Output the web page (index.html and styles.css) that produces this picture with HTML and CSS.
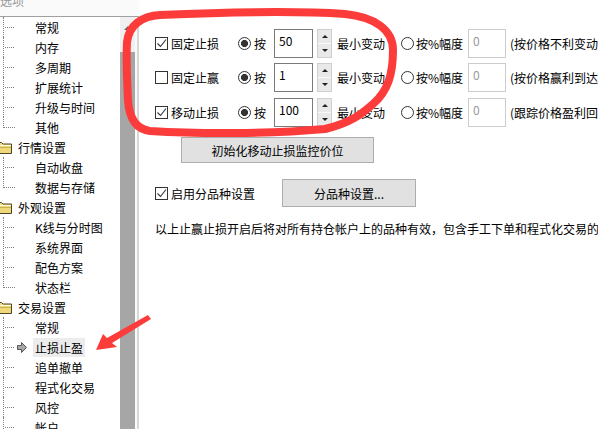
FILE: index.html
```html
<!DOCTYPE html>
<html lang="zh-CN">
<head>
<meta charset="utf-8">
<title>选项 - 止损止盈</title>
<link rel="stylesheet" href="styles.css">
</head>
<body>
<div class="app">
  <aside class="side">
    <div class="side-head"><span class="side-title">选项</span></div>
    <div class="side-body">
      <ul class="tree">
        <li class="node child"><span class="branch"></span><span class="mark"></span><span class="label">常规</span></li>
        <li class="node child"><span class="branch"></span><span class="mark"></span><span class="label">内存</span></li>
        <li class="node child"><span class="branch"></span><span class="mark"></span><span class="label">多周期</span></li>
        <li class="node child"><span class="branch"></span><span class="mark"></span><span class="label">扩展统计</span></li>
        <li class="node child"><span class="branch"></span><span class="mark"></span><span class="label">升级与时间</span></li>
        <li class="node child last"><span class="branch"></span><span class="mark"></span><span class="label">其他</span></li>
        <li class="node parent"><svg class="folder" width="16" height="13" viewBox="0 0 16 13"><path d="M0.5 1.5h5l1.5 1.5h8.5v9.5h-15z" fill="#efd97a" stroke="#4d4426"/><path d="M1.5 4.5h13.5" stroke="#fffbe0"/><path d="M1 6.5h14" stroke="#c9b14e"/></svg><span class="label">行情设置</span></li>
        <li class="node child"><span class="branch"></span><span class="mark"></span><span class="label">自动收盘</span></li>
        <li class="node child last"><span class="branch"></span><span class="mark"></span><span class="label">数据与存储</span></li>
        <li class="node parent"><svg class="folder" width="16" height="13" viewBox="0 0 16 13"><path d="M0.5 1.5h5l1.5 1.5h8.5v9.5h-15z" fill="#efd97a" stroke="#4d4426"/><path d="M1.5 4.5h13.5" stroke="#fffbe0"/><path d="M1 6.5h14" stroke="#c9b14e"/></svg><span class="label">外观设置</span></li>
        <li class="node child"><span class="branch"></span><span class="mark"></span><span class="label">K线与分时图</span></li>
        <li class="node child"><span class="branch"></span><span class="mark"></span><span class="label">系统界面</span></li>
        <li class="node child"><span class="branch"></span><span class="mark"></span><span class="label">配色方案</span></li>
        <li class="node child last"><span class="branch"></span><span class="mark"></span><span class="label">状态栏</span></li>
        <li class="node parent"><svg class="folder" width="16" height="13" viewBox="0 0 16 13"><path d="M0.5 1.5h5l1.5 1.5h8.5v9.5h-15z" fill="#efd97a" stroke="#4d4426"/><path d="M1.5 4.5h13.5" stroke="#fffbe0"/><path d="M1 6.5h14" stroke="#c9b14e"/></svg><span class="label">交易设置</span></li>
        <li class="node child"><span class="branch"></span><span class="mark"></span><span class="label">常规</span></li>
        <li class="node child selected"><span class="branch"></span><span class="mark"><svg width="10" height="11" viewBox="0 0 10 11"><path d="M0.5 3.5h4v-3l5 5-5 5v-3h-4z" fill="#a8a8a8" stroke="#555"/></svg></span><span class="label">止损止盈</span></li>
        <li class="node child"><span class="branch"></span><span class="mark"></span><span class="label">追单撤单</span></li>
        <li class="node child"><span class="branch"></span><span class="mark"></span><span class="label">程式化交易</span></li>
        <li class="node child"><span class="branch"></span><span class="mark"></span><span class="label">风控</span></li>
        <li class="node child"><span class="branch"></span><span class="mark"></span><span class="label">帐户</span></li>
      </ul>
      <div class="vscroll">
        <div class="vs-top"><span class="vs-arrow"></span></div>
        <div class="vs-thumb"></div>
      </div>
      <div class="side-edge"></div>
    </div>
  </aside>

  <main class="panel">
    <div class="opts">
      <div class="opt">
        <span class="chk"><svg width="11" height="11" viewBox="0 0 11 11"><path d="M1.5 5.5l3 3 5.5-7" fill="none" stroke="#333" stroke-width="1.1"/></svg></span>
        <span class="olbl">固定止损</span>
        <span class="rad on"></span><span class="rlbl">按</span>
        <span class="edit">50</span>
        <span class="spin"><span class="sp"><i class="up"></i></span><span class="sp"><i class="dn"></i></span></span>
        <span class="unit">最小变动</span>
        <span class="rad"></span><span class="plbl">按%幅度</span>
        <span class="edit dis">0</span>
        <span class="note">(按价格不利变动</span>
      </div>
      <div class="opt">
        <span class="chk"></span>
        <span class="olbl">固定止赢</span>
        <span class="rad on"></span><span class="rlbl">按</span>
        <span class="edit">1</span>
        <span class="spin"><span class="sp"><i class="up"></i></span><span class="sp"><i class="dn"></i></span></span>
        <span class="unit">最小变动</span>
        <span class="rad"></span><span class="plbl">按%幅度</span>
        <span class="edit dis">0</span>
        <span class="note">(按价格赢利到达</span>
      </div>
      <div class="opt">
        <span class="chk"><svg width="11" height="11" viewBox="0 0 11 11"><path d="M1.5 5.5l3 3 5.5-7" fill="none" stroke="#333" stroke-width="1.1"/></svg></span>
        <span class="olbl">移动止损</span>
        <span class="rad on"></span><span class="rlbl">按</span>
        <span class="edit">100</span>
        <span class="spin"><span class="sp"><i class="up"></i></span><span class="sp"><i class="dn"></i></span></span>
        <span class="unit">最小变动</span>
        <span class="rad"></span><span class="plbl">按%幅度</span>
        <span class="edit dis">0</span>
        <span class="note">(跟踪价格盈利回</span>
      </div>
    </div>

    <div class="btn btn-init">初始化移动止损监控价位</div>

    <div class="opt opt-split">
      <span class="chk"><svg width="11" height="11" viewBox="0 0 11 11"><path d="M1.5 5.5l3 3 5.5-7" fill="none" stroke="#333" stroke-width="1.1"/></svg></span>
      <span class="olbl wide">启用分品种设置</span>
      <div class="btn btn-split">分品种设置...</div>
    </div>

    <p class="info">以上止赢止损开启后将对所有持仓帐户上的品种有效，包含手工下单和程式化交易的</p>
  </main>

  <svg class="annot" width="598" height="429" viewBox="0 0 598 429">
    <path d="M160 15 C230 12 300 11 345 14 C375 17 393 30 393 50 C393 74 388 91 373 104 C362 114 350 123 325 129 C270 134 200 134 150 131 C135 129 129 117 128 100 C127 80 126 60 127 42 C129 25 142 16 160 15 Z" fill="none" stroke="#fc3b3b" stroke-width="8" stroke-linejoin="round"/>
    <polygon points="96,350 103,334 107,338 148,315 151,319 112,343 117,347" fill="#fc3b3b"/>
  </svg>
</div>
</body>
</html>
```

FILE: styles.css
```css
html, body {
  margin: 0;
  padding: 0;
  background: #fff;
}

body {
  font-family: "Noto Sans CJK SC", "Microsoft YaHei", sans-serif;
  font-size: 12px;
  color: #000;
}

.app {
  position: relative;
  display: flex;
  width: 598px;
  height: 429px;
  overflow: hidden;
}

/* ---------- left side ---------- */
.side {
  width: 139px;
  flex: none;
  display: flex;
  flex-direction: column;
}

.side-head {
  height: 16px;
  flex: none;
  background: #fafafa;
  border-bottom: 1px solid #a0a0a0;
  overflow: hidden;
}

.side-title {
  display: block;
  margin-top: -7px;
  line-height: 16px;
  color: #9a9a9a;
}

.side-body {
  flex: 1;
  display: flex;
  min-height: 0;
}

.tree {
  width: 120px;
  flex: none;
  list-style: none;
  margin: 0;
  padding: 0;
  overflow: hidden;
  background: #fff;
}

.node {
  height: 20px;
  display: flex;
  align-items: center;
  white-space: nowrap;
}

.branch {
  flex: none;
  box-sizing: border-box;
  margin-left: 3px;
  width: 12px;
  height: 20px;
  border-left: 1px dotted #808080;
  background: repeating-linear-gradient(90deg, #808080 0 1px, transparent 1px 2px) 1px 10px / 100% 1px no-repeat;
}

.node.last .branch {
  align-self: flex-start;
  height: 11px;
  background: none;
  border-bottom: 1px dotted #808080;
}

.mark {
  flex: none;
  width: 18px;
  display: flex;
  align-items: center;
  padding-left: 2px;
  box-sizing: border-box;
}

.label {
  padding: 0 2px;
  line-height: 19px;
}

.node.selected .label {
  background: #ececec;
}

.folder {
  flex: none;
  margin-left: -4px;
  margin-right: 4px;
}

.vscroll {
  width: 15px;
  flex: none;
  background: #f0f0f0;
  display: flex;
  flex-direction: column;
}

.vs-top {
  height: 35px;
  flex: none;
  display: flex;
  justify-content: center;
  padding-top: 9px;
  box-sizing: border-box;
}

.vs-arrow {
  width: 0;
  height: 0;
  border-left: 4px solid transparent;
  border-right: 4px solid transparent;
  border-bottom: 4px solid #606060;
}

.vs-thumb {
  flex: 1;
  background: #a6a6a6;
}

.side-edge {
  width: 4px;
  flex: none;
  box-sizing: border-box;
  border-left: 2px solid #fafafa;
  border-right: 2px solid #d8d8d8;
}

/* ---------- right panel ---------- */
.panel {
  flex: 1;
  min-width: 0;
  overflow: hidden;
  background: #fff;
  padding: 29px 0 0 16px;
}

.opts {
  display: flex;
  flex-direction: column;
  gap: 5px;
}

.opt {
  display: flex;
  align-items: center;
  height: 29px;
  white-space: nowrap;
}

.opt:last-child {
  margin-top: 1px;
}

.chk {
  flex: none;
  width: 13px;
  height: 13px;
  box-sizing: border-box;
  border: 1px solid #333;
  background: #fff;
  display: flex;
  align-items: center;
  justify-content: center;
  margin-right: 3px;
}

.olbl {
  flex: none;
  width: 67px;
}

.olbl.wide {
  width: 111px;
}

.rad {
  flex: none;
  width: 13px;
  height: 13px;
  box-sizing: border-box;
  border: 1px solid #333;
  border-radius: 50%;
  background: #fff;
  margin-right: 3px;
}

.rad.on {
  background: radial-gradient(circle, #333 0 3.3px, #fff 3.8px);
}

.rlbl {
  flex: none;
  width: 20px;
}

.edit {
  flex: none;
  width: 39px;
  height: 29px;
  box-sizing: border-box;
  border: 1px solid #7a7a7a;
  padding: 3px 4px;
  line-height: 16px;
  align-self: flex-start;
}

.edit.dis {
  width: 38px;
  border-color: #cccccc;
  color: #9a9a9a;
}

.spin {
  flex: none;
  width: 15px;
  height: 29px;
  margin-left: 4px;
  box-sizing: border-box;
  border: 1px solid #cfcfcf;
  background: #f0f0f0;
  display: flex;
  flex-direction: column;
}

.sp {
  flex: 1;
  display: flex;
  align-items: center;
  justify-content: center;
  background: #e9e9e9;
}

.sp + .sp {
  border-top: 1px solid #fafafa;
}

.sp .up {
  width: 0;
  height: 0;
  border-left: 3px solid transparent;
  border-right: 3px solid transparent;
  border-bottom: 3px solid #222;
}

.sp .dn {
  width: 0;
  height: 0;
  border-left: 3px solid transparent;
  border-right: 3px solid transparent;
  border-top: 3px solid #222;
}

.unit {
  flex: none;
  width: 64px;
  margin-left: 5px;
}

.plbl {
  flex: none;
  width: 52px;
  margin-left: -1px;
}

.note {
  margin-left: 4px;
}

.btn {
  box-sizing: border-box;
  background: #e1e1e1;
  border: 1px solid #adadad;
  display: flex;
  align-items: center;
  justify-content: center;
  white-space: nowrap;
}

.btn-init {
  width: 193px;
  height: 26px;
  margin: 10px 0 0 26px;
}

.opt-split {
  height: 28px;
  margin-top: 16px;
}

.btn-split {
  width: 134px;
  height: 28px;
}

.info {
  margin: 14px 0 0;
  line-height: 16px;
  white-space: nowrap;
}

/* annotation overlay */
.annot {
  position: absolute;
  left: 0;
  top: 0;
  pointer-events: none;
}
```
